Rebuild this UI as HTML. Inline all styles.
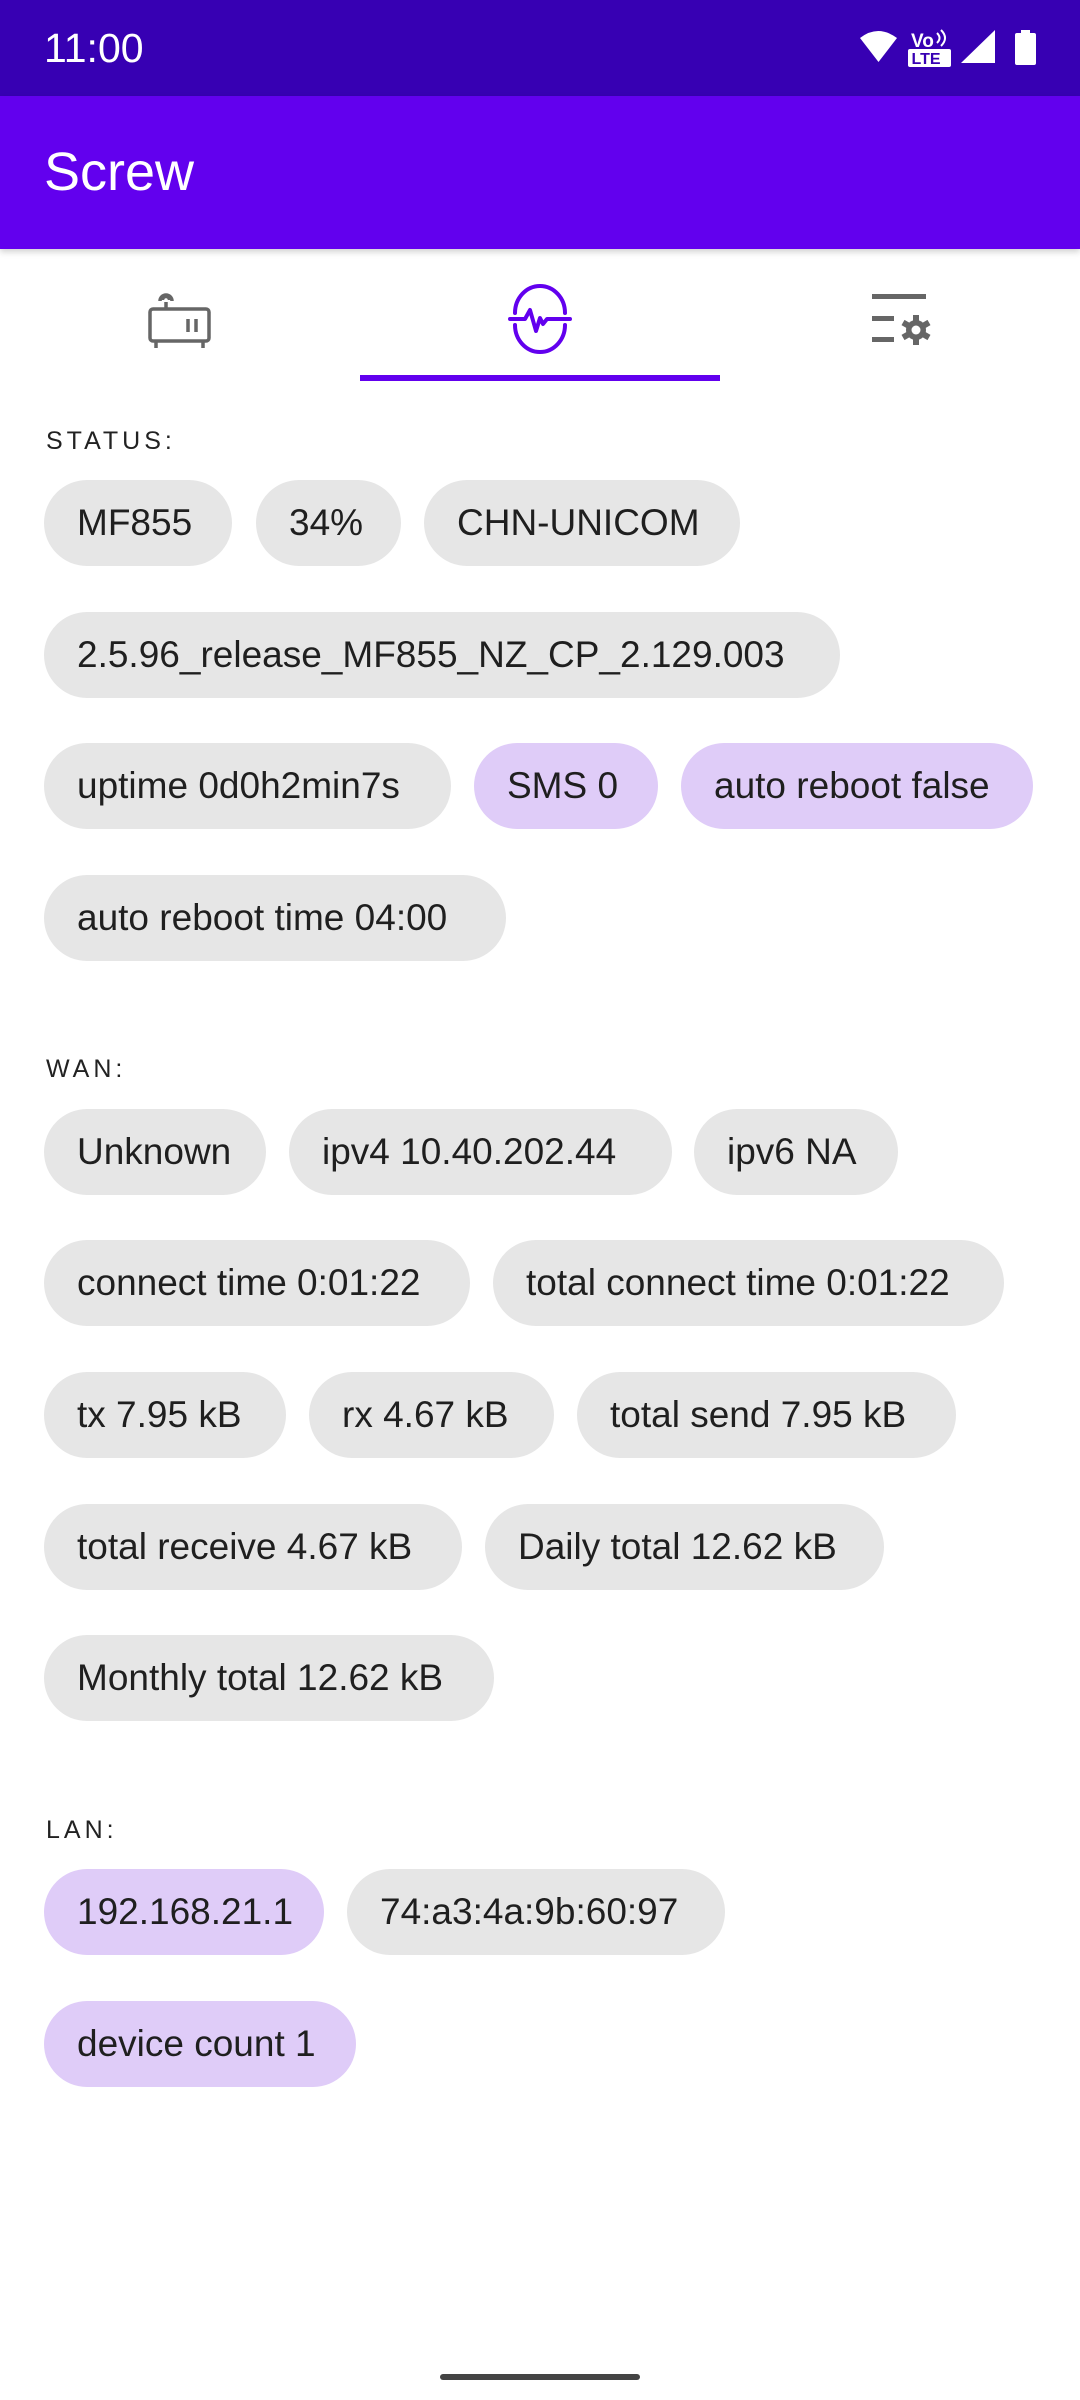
<!DOCTYPE html>
<html><head><meta charset="utf-8"><style>
*{margin:0;padding:0;box-sizing:border-box}
body{width:1080px;height:2400px;background:#fff;position:relative;overflow:hidden;font-family:"Liberation Sans",sans-serif}
.sb{position:absolute;left:0;top:0;width:1080px;height:96px;background:#3700b3}
.time{position:absolute;left:44px;top:24px;color:#fff;font-size:41px;line-height:48px}
.ab{position:absolute;left:0;top:96px;width:1080px;height:153px;background:#6200ee;box-shadow:0 3px 6px rgba(0,0,0,.18)}
.title{position:absolute;left:44px;top:48px;color:#fff;font-size:54px;line-height:56px}
.ind{position:absolute;left:360px;top:375px;width:360px;height:6px;background:#6200ee}
.h{position:absolute;left:46px;font-size:25px;letter-spacing:4px;color:#222;line-height:30px}
.c{position:absolute;height:86px;border-radius:43px;background:#e6e6e6;color:#1f1f1f;font-size:37px;line-height:86px;text-align:left;padding-left:33px;white-space:nowrap}
.p{background:#dfccf8}
.nav{position:absolute;left:440px;top:2374px;width:200px;height:6px;border-radius:3px;background:#444}
</style></head><body>
<div class="sb"><div class="time">11:00</div>
<svg style="position:absolute;left:850px;top:26px" width="200" height="46" viewBox="850 26 200 46">
<path d="M860 38 Q878 24 897 38 L878.5 62 Z" fill="#fff"/>
<text x="911" y="47" font-family="Liberation Sans" font-weight="bold" font-size="19" fill="#fff">Vo</text>
<path d="M937 33 q5 5 0 10 M941 30 q8 8 0 16" stroke="#fff" stroke-width="2" fill="none"/>
<rect x="908" y="49" width="43" height="18" rx="2" fill="#fff"/>
<text x="911.5" y="64" font-family="Liberation Sans" font-weight="bold" font-size="16" fill="#3700b3">LTE</text>
<path d="M961 63 L995 30 L995 63 Z" fill="#fff"/>
<rect x="1015" y="33" width="21" height="32" rx="2" fill="#fff"/><rect x="1021" y="30" width="9" height="4" fill="#fff"/>
</svg></div>
<div class="ab"><div class="title">Screw</div></div>
<svg style="position:absolute;left:140px;top:284px" width="80" height="70" viewBox="140 284 80 70">
<g stroke="#666" stroke-width="3.5" fill="none">
<rect x="150" y="309" width="59" height="32" rx="3"/>
<path d="M156 341 v7 M203 341 v7 M166 302 v7"/>
<path d="M160 301 a6 6 0 0 1 12 0 M162.5 300 a3.5 3.5 0 0 1 7 0"/>
<path d="M188 319 v13 M196 319 v13"/></g></svg>
<svg style="position:absolute;left:500px;top:284px" width="80" height="70" viewBox="500 284 80 70">
<g stroke="#6200ee" stroke-width="4" fill="none" stroke-linecap="round" stroke-linejoin="round">
<path d="M515 313 A25 27 0 0 1 565 313"/>
<path d="M515 325 A25 27 0 0 0 565 325"/>
<path d="M510 319 H525 L530 310 L536 331 L540 318 L543 324 L547 319 H570"/></g></svg>
<svg style="position:absolute;left:865px;top:290px" width="70" height="60" viewBox="865 290 70 60">
<g fill="#666"><rect x="872" y="294" width="54" height="5"/><rect x="872" y="316" width="22" height="5"/><rect x="872" y="337" width="22" height="5"/></g>
<g transform="translate(916 330)"><circle r="10" fill="#666"/>
<g fill="#666"><rect x="-3" y="-15" width="6" height="30"/><rect x="-3" y="-15" width="6" height="30" transform="rotate(60)"/><rect x="-3" y="-15" width="6" height="30" transform="rotate(120)"/></g><circle r="4.5" fill="#fff"/></g></svg>
<div class="ind"></div>

<div class="h" style="top:426px">STATUS:</div>
<div class="c" style="top:480px;left:44px;width:188px">MF855</div>
<div class="c" style="top:480px;left:256px;width:145px">34%</div>
<div class="c" style="top:480px;left:424px;width:316px">CHN-UNICOM</div>
<div class="c" style="top:612px;left:44px;width:796px">2.5.96_release_MF855_NZ_CP_2.129.003</div>
<div class="c" style="top:743px;left:44px;width:407px">uptime 0d0h2min7s</div>
<div class="c p" style="top:743px;left:474px;width:184px">SMS 0</div>
<div class="c p" style="top:743px;left:681px;width:352px">auto reboot false</div>
<div class="c" style="top:875px;left:44px;width:462px">auto reboot time 04:00</div>

<div class="h" style="top:1054px">WAN:</div>
<div class="c" style="top:1109px;left:44px;width:222px">Unknown</div>
<div class="c" style="top:1109px;left:289px;width:383px">ipv4 10.40.202.44</div>
<div class="c" style="top:1109px;left:694px;width:204px">ipv6 NA</div>
<div class="c" style="top:1240px;left:44px;width:426px">connect time 0:01:22</div>
<div class="c" style="top:1240px;left:493px;width:511px">total connect time 0:01:22</div>
<div class="c" style="top:1372px;left:44px;width:242px">tx 7.95 kB</div>
<div class="c" style="top:1372px;left:309px;width:245px">rx 4.67 kB</div>
<div class="c" style="top:1372px;left:577px;width:379px">total send 7.95 kB</div>
<div class="c" style="top:1504px;left:44px;width:418px">total receive 4.67 kB</div>
<div class="c" style="top:1504px;left:485px;width:399px">Daily total 12.62 kB</div>
<div class="c" style="top:1635px;left:44px;width:450px">Monthly total 12.62 kB</div>

<div class="h" style="top:1815px">LAN:</div>
<div class="c p" style="top:1869px;left:44px;width:280px">192.168.21.1</div>
<div class="c" style="top:1869px;left:347px;width:378px">74:a3:4a:9b:60:97</div>
<div class="c p" style="top:2001px;left:44px;width:312px">device count 1</div>

<div class="nav"></div>
</body></html>
